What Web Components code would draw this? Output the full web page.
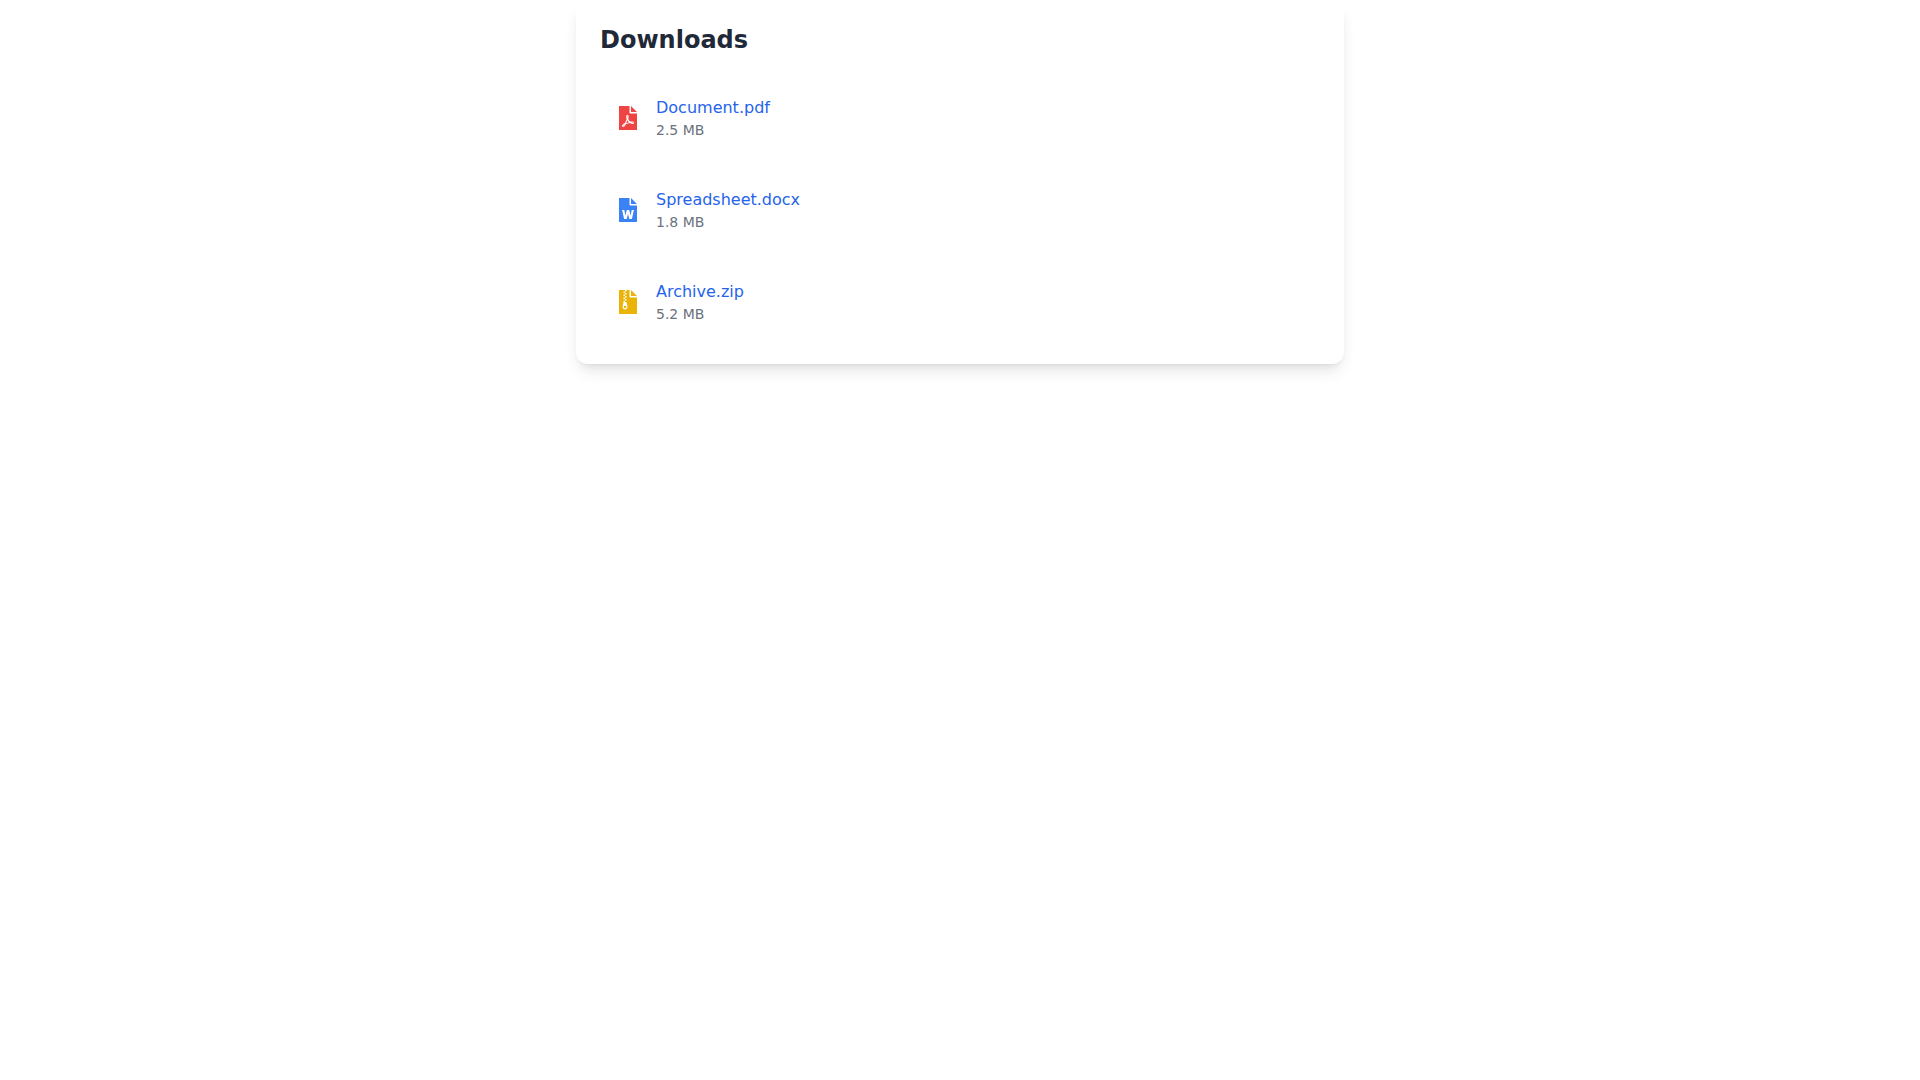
<!DOCTYPE html>
<html lang="en">
<head>
<meta charset="utf-8">
<title>Downloads</title>
<style>
html { background: #fff; }
body { margin: 0; min-height: 100vh; background: #fff; font-family: "DejaVu Sans", sans-serif; }
</style>
</head>
<body>
<download-card>
  <span slot="title">Downloads</span>
  <download-item kind="pdf" href="#document"><span slot="name">Document.pdf</span><span slot="size">2.5 MB</span></download-item>
  <download-item kind="word" href="#spreadsheet"><span slot="name">Spreadsheet.docx</span><span slot="size">1.8 MB</span></download-item>
  <download-item kind="zip" href="#archive"><span slot="name">Archive.zip</span><span slot="size">5.2 MB</span></download-item>
</download-card>
<script>
const icons = {
  pdf: { color: '#ef4444', shape: '<path d="M181.900 256.100c-5-16-4.900-46.900-2-46.900 8.400 0 7.600 36.900 2 46.900zm-1.700 47.200c-7.700 20.200-17.300 43.300-28.400 62.700 18.300-7 39-17.200 62.900-21.900-12.700-9.600-24.900-23.400-34.500-40.800zM86.100 428.100c0 .8 13.200-5.400 34.900-40.200-6.700 6.300-29.100 24.500-34.900 40.200zM248 160h136v352H0V0h224v136c0 13.200 10.800 24 24 24zm-8 171.800c-20-12.200-33.300-29-42.700-53.800 4.500-18.500 11.600-46.600 6.200-64.200-4.700-29.400-42.400-26.500-47.800-6.800-5 18.300-.4 44.100 8.100 77-11.600 27.600-28.700 64.600-40.800 85.800-.1 0-.1.1-.2.1-27.100 13.900-73.600 44.500-54.500 68 5.600 6.900 16 10 21.500 10 17.900 0 35.700-18 61.100-61.800 25.800-8.500 54.100-19.100 79-23.200 21.700 11.800 47.100 19.500 64 19.500 29.200 0 31.200-32 19.700-43.400-13.900-13.600-54.300-9.700-73.600-7.200zM256 0l128 128H256zM302.900 360.300c4.100-2.700-2.500-11.900-42.800-9 37.100 15.800 42.800 9 42.800 9z"/>' },
  word: { color: '#3b82f6', shape: '<path d="M224 0v136c0 13.200 10.800 24 24 24h136v352H0V0zM256 0l128 128H256z"/><path fill="#fff" d="M66 256h47l23 116 30-116h52l30 116 23-116h47l-43 192h-56l-27-106-27 106h-56z"/>' },
  zip: { color: '#eab308', shape: '<path d="M256 0l128 128H256zM128.400 338c-17 0-28 11-28 25 0 14 12 25 28 25s28-11 28-25-12-25-28-25zM224 136V0h-63.600v32h-32V0H0v512h384V160H248c-13.200 0-24-10.800-24-24zM95.900 32h32v32h-32zm32.300 384c-33.200 0-58-30.400-51.400-62.900L96.400 256v-32h32v-32h-32v-32h32v-32h-32V96h32V64h32v32h-32v32h32v32h-32v32h32v32h-32v32h22.100c5.700 0 10.700 4.100 11.800 9.700l17.300 87.700c6.400 32.400-18.400 62.600-51.400 62.600z"/>' }
};

class DownloadCard extends HTMLElement {
  constructor() {
    super();
    this.attachShadow({ mode: 'open' }).innerHTML = `
      <style>
        :host { display: block; box-sizing: border-box; max-width: 768px; margin: 0 auto; padding: 24px;
          background: #fff; border-radius: 12px;
          box-shadow: 0 10px 15px -3px rgb(0 0 0 / .1), 0 4px 6px -4px rgb(0 0 0 / .1); }
        h2 { margin: 0 0 24px; font-size: 24px; line-height: 32px; font-weight: 700; color: #1f2937; }
        .list { display: flex; flex-direction: column; gap: 16px; }
      </style>
      <h2><slot name="title"></slot></h2>
      <div class="list" role="list"><slot></slot></div>`;
  }
}

class DownloadItem extends HTMLElement {
  constructor() {
    super();
    this.attachShadow({ mode: 'open' });
  }
  connectedCallback() {
    const icon = icons[this.getAttribute('kind')];
    this.setAttribute('role', 'listitem');
    this.shadowRoot.innerHTML = `
      <style>
        :host { display: flex; align-items: center; gap: 16px; padding: 16px; border-radius: 8px; }
        :host(:hover) { background: #f9fafb; }
        svg { display: block; flex: none; width: 24px; height: 24px; fill: ${icon.color}; }
        .text { flex: 1; min-width: 0; }
        a { display: block; width: fit-content; font-size: 16px; line-height: 24px; color: #2563eb; text-decoration: none; }
        a:hover { text-decoration: underline; }
        p { margin: 0; font-size: 14px; line-height: 20px; color: #6b7280; }
      </style>
      <svg viewBox="0 0 384 512" aria-hidden="true">${icon.shape}</svg>
      <div class="text">
        <a href="${this.getAttribute('href')}"><slot name="name"></slot></a>
        <p><slot name="size"></slot></p>
      </div>`;
  }
}

customElements.define('download-card', DownloadCard);
customElements.define('download-item', DownloadItem);
</script>
</body>
</html>
